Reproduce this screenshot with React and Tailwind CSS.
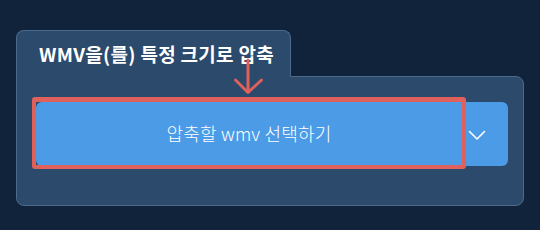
const font = { fontFamily: '"Noto Sans CJK KR", "Noto Sans", sans-serif' };

function DownArrow() {
  return (
    <svg
      className="absolute left-[232px] top-[58px] z-20"
      width="34"
      height="38"
      viewBox="0 0 34 38"
      fill="none"
      stroke="#e0605c"
      strokeWidth="3"
      strokeLinecap="round"
      strokeLinejoin="round"
    >
      <path d="M16 2 V34" />
      <path d="M3.5 22 L16 34.5 L29.5 22" />
    </svg>
  );
}

function Chevron() {
  return (
    <svg width="18" height="11" viewBox="0 0 18 11" fill="none" stroke="white" strokeWidth="1.6" strokeLinecap="round" strokeLinejoin="round">
      <path d="M1.5 1.5 L9 9 L16.5 1.5" />
    </svg>
  );
}

export default function App() {
  return (
    <div
      className="relative h-[230px] w-[540px] bg-[#10233a] pl-4 pt-[30px]"
      style={font}
    >
      <div className="flex w-[508px] flex-col">
        <div className="relative z-10 -mb-px flex h-[47px] w-[275px] items-center rounded-t-lg border border-b-0 border-[#4b6a8c] bg-[#2c4a6b] pb-[2px] pl-[22px]">
          <h1 className="text-[19px] font-bold leading-none tracking-[0.3px] text-white">
            WMV을(를) 특정 크기로 압축
          </h1>
        </div>
        <div className="h-[130px] rounded-b-lg rounded-tr-lg border border-[#4b6a8c] bg-[#2c4a6b] pl-[19px] pr-[15px] pt-[25px]">
          <div className="relative flex h-[64px]">
            <button className="flex h-full w-[426px] items-center justify-center rounded-l-md bg-[#4c9be7] pb-px text-[18px] font-light tracking-[0.2px] text-white">
              압축할 wmv 선택하기
            </button>
            <button className="flex h-full flex-1 items-center rounded-r-md bg-[#4c9be7] pl-[6px] pt-[2px] text-white">
              <Chevron />
            </button>
            <div className="absolute -left-[4px] -top-[5px] h-[72px] w-[434px] rounded-[3px] border-[4px] border-t-[5px] border-[#e0605c]" />
          </div>
        </div>
      </div>
      <DownArrow />
    </div>
  );
}
